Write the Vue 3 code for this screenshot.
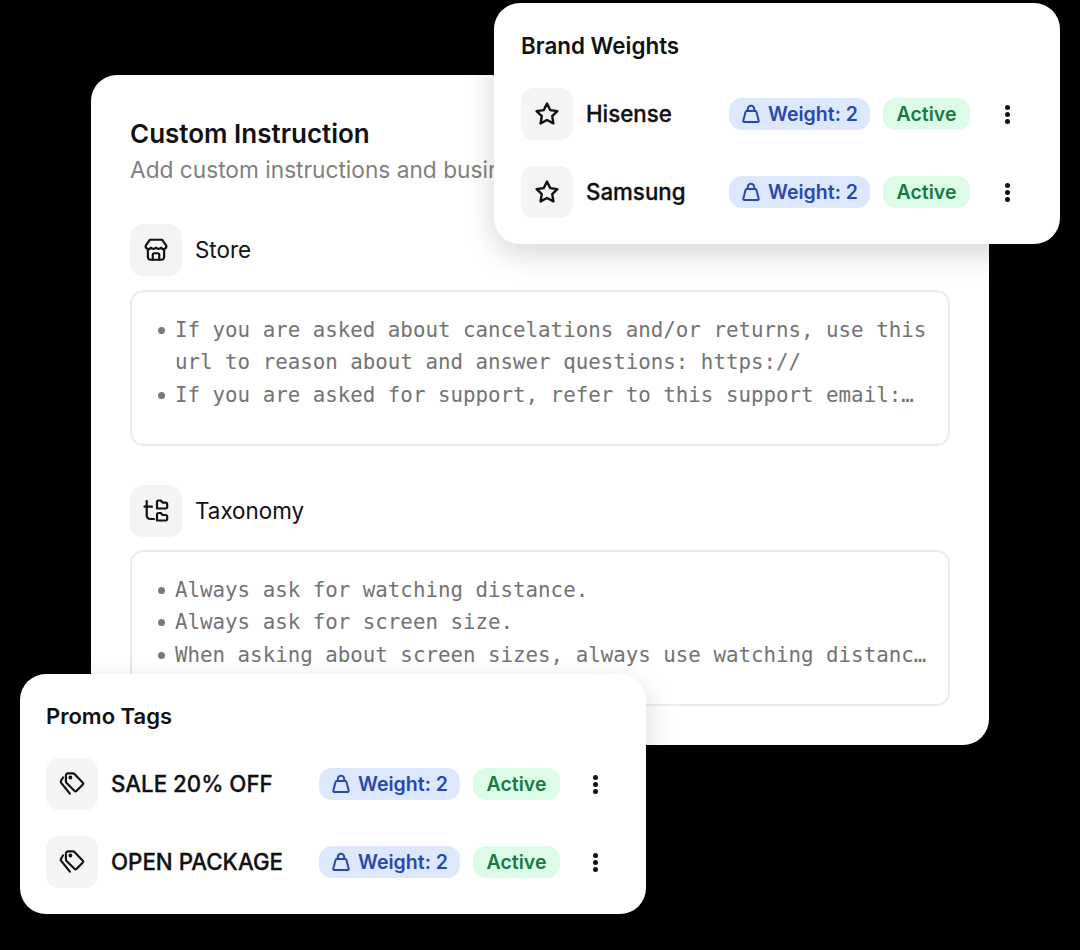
<script setup>
const brands = [{ name: 'Hisense' }, { name: 'Samsung' }]
const promos = [{ name: 'SALE 20% OFF' }, { name: 'OPEN PACKAGE' }]
const storeLines = [
  'If you are asked about cancelations and/or returns, use this url to reason about and answer questions: https://',
  'If you are asked for support, refer to this support email:…',
]
const taxonomyLines = [
  'Always ask for watching distance.',
  'Always ask for screen size.',
  'When asking about screen sizes, always use watching distanc…',
]
</script>

<template>
  <div class="stage">
    <section class="main-card">
      <h1 class="main-title">Custom Instruction</h1>
      <p class="main-sub">Add custom instructions and business</p>

      <div class="field-head store-head">
        <span class="icon-box">
          <svg class="icon" viewBox="0 0 24 24" fill="none" stroke="#111" stroke-width="2" stroke-linejoin="round" stroke-linecap="round">
            <path d="M6.500 2.500h11L21.500 8a2.600 2.600 0 0 1-4.800 1.800 3 3 0 0 1-4.700 0 3 3 0 0 1-4.700 0A2.600 2.600 0 0 1 2.500 8z" />
            <path d="M4.500 11.500v7A2.500 2.500 0 0 0 7 21h10a2.500 2.500 0 0 0 2.500-2.500v-7" />
            <path d="M9 21v-4.500a1.500 1.500 0 0 1 1.500-1.500h3a1.500 1.500 0 0 1 1.500 1.500V21" />
          </svg>
        </span>
        <span class="field-label">Store</span>
      </div>
      <ul class="text-box">
        <li v-for="line in storeLines" :key="line">{{ line }}</li>
      </ul>

      <div class="field-head taxonomy-head">
        <span class="icon-box">
          <svg class="icon" viewBox="0 0 26 26" fill="none" stroke="#111" stroke-width="2.200" stroke-linejoin="round" stroke-linecap="round">
            <path d="M3.700 3v14.500A3.500 3.500 0 0 0 7.200 21H11" />
            <path d="M1.500 8.700H9" />
            <path d="M14 10.500V4A1.500 1.500 0 0 1 15.500 2.500h2.300l1.700 2.200h3.200a1.500 1.500 0 0 1 1.500 1.500v2.800a1.500 1.500 0 0 1-1.500 1.500z" />
            <path d="M14 22.500v-6A1.500 1.500 0 0 1 15.500 15h2.300l1.700 2h3.200a1.500 1.500 0 0 1 1.500 1.500V21a1.500 1.500 0 0 1-1.500 1.500z" />
          </svg>
        </span>
        <span class="field-label">Taxonomy</span>
      </div>
      <ul class="text-box second-box">
        <li v-for="line in taxonomyLines" :key="line">{{ line }}</li>
      </ul>
    </section>

    <section class="float-card brand-card">
      <h2 class="float-title">Brand Weights</h2>
      <div v-for="b in brands" :key="b.name" class="row">
        <span class="icon-box">
          <svg class="icon" viewBox="0 0 24 24" fill="none" stroke="#111" stroke-width="2.200" stroke-linejoin="round">
            <path d="M12 2.300l2.950 6.100 6.650.95-4.800 4.650 1.150 6.700L12 17.550 6.050 20.700l1.150-6.700-4.800-4.650 6.650-.95z" />
          </svg>
        </span>
        <span class="row-name">{{ b.name }}</span>
        <span class="pill pill-weight">
          <svg class="weight-icon" viewBox="0 0 20 20" fill="none" stroke="#2a47ae" stroke-width="2" stroke-linejoin="round">
            <path d="M6.800 7V5a3.200 3.200 0 0 1 6.400 0V7" />
            <path d="M5.600 7h8.800a1 1 0 0 1 1 .8l2.300 9a1 1 0 0 1-1 1.200H3.300a1 1 0 0 1-1-1.200l2.300-9a1 1 0 0 1 1-.8z" />
          </svg>
          Weight: 2
        </span>
        <span class="pill pill-active">Active</span>
        <span class="dots"><i></i><i></i><i></i></span>
      </div>
    </section>

    <section class="float-card promo-card">
      <h2 class="float-title">Promo Tags</h2>
      <div v-for="p in promos" :key="p.name" class="row">
        <span class="icon-box">
          <svg class="icon" viewBox="0 0 24 24" fill="none" stroke="#111" stroke-width="2" stroke-linejoin="round" stroke-linecap="round">
            <path d="M8.300 2.200h4.500a2 2 0 0 1 1.500.6l7.500 7.800a1.500 1.500 0 0 1 0 2.100l-5.500 5.600a1.500 1.500 0 0 1-2.100 0L7 11a2 2 0 0 1-.6-1.400V4.100a1.900 1.900 0 0 1 1.900-1.900z" />
            <path d="M3.700 6 2 8.800a2 2 0 0 0 .2 2.400l7.800 9.700" />
            <circle cx="10.500" cy="6" r="0.800" />
          </svg>
        </span>
        <span class="row-name">{{ p.name }}</span>
        <span class="pill pill-weight">
          <svg class="weight-icon" viewBox="0 0 20 20" fill="none" stroke="#2a47ae" stroke-width="2" stroke-linejoin="round">
            <path d="M6.800 7V5a3.200 3.200 0 0 1 6.400 0V7" />
            <path d="M5.600 7h8.800a1 1 0 0 1 1 .8l2.300 9a1 1 0 0 1-1 1.200H3.300a1 1 0 0 1-1-1.200l2.300-9a1 1 0 0 1 1-.8z" />
          </svg>
          Weight: 2
        </span>
        <span class="pill pill-active">Active</span>
        <span class="dots"><i></i><i></i><i></i></span>
      </div>
    </section>
  </div>
</template>

<style>
html, body {
  background: #000;
}
</style>

<style scoped>
.stage {
  position: relative;
  height: 950px;
  padding: 75px 0 0 91px;
  box-sizing: border-box;
  overflow: hidden;
  font-family: Inter, "Liberation Sans", sans-serif;
  color: #111;
}
.main-card {
  width: 898px;
  height: 670px;
  box-sizing: border-box;
  padding: 44px 39px 0;
  background: #fff;
  border-radius: 26px;
}
.main-title {
  margin: 0;
  font-size: 26px;
  line-height: 30px;
  font-weight: 600;
}
.main-sub {
  margin: 6px 0 0;
  font-size: 22.700px;
  line-height: 30px;
  font-weight: 400;
  color: #7f7f7f;
  white-space: nowrap;
}
.field-head {
  display: flex;
  align-items: center;
  gap: 13px;
}
.store-head {
  margin-top: 39px;
}
.taxonomy-head {
  margin-top: 39px;
}
.field-label {
  font-size: 22.400px;
  line-height: 30px;
  font-weight: 400;
}
.icon-box {
  flex: none;
  width: 52px;
  height: 52px;
  border-radius: 13px;
  background: #f4f4f4;
  display: flex;
  align-items: center;
  justify-content: center;
}
.icon {
  width: 26px;
  height: 26px;
}
.text-box {
  list-style: none;
  margin: 14px 0 0;
  padding: 21.500px 18px 0 26px;
  height: 156px;
  box-sizing: border-box;
  border: 2px solid #ececec;
  border-radius: 14px;
  font-family: "DejaVu Sans Mono", "Liberation Mono", monospace;
  font-size: 20.800px;
  line-height: 32.800px;
  color: #737373;
}
.second-box {
  margin-top: 13px;
}
.text-box li {
  display: flex;
  gap: 10px;
}
.text-box li::before {
  content: "";
  flex: none;
  width: 7px;
  height: 7px;
  margin-top: 13px;
  border-radius: 50%;
  background: #7a7a7a;
}
.float-card {
  position: absolute;
  box-sizing: border-box;
  background: #fff;
  border-radius: 26px;
  box-shadow: 0 10px 30px rgba(0, 0, 0, 0.16);
}
.brand-card {
  left: 494px;
  top: 3px;
  width: 566px;
  height: 241px;
  padding: 27px 27px 0;
}
.promo-card {
  left: 20px;
  top: 674px;
  width: 626px;
  height: 240px;
  padding: 26px 25px 0 26px;
}
.float-title {
  margin: 0 0 26px;
  font-size: 22.400px;
  line-height: 32px;
  font-weight: 600;
}
.promo-card .float-title {
  font-size: 22px;
}
.row {
  display: flex;
  align-items: center;
  height: 52px;
  margin-bottom: 26px;
}
.row-name {
  margin: -1px 0 0 13px;
  flex: 1;
  font-size: 22.300px;
  font-weight: 500;
  -webkit-text-stroke: 0.3px #111;
  white-space: nowrap;
}
.pill {
  display: flex;
  align-items: center;
  justify-content: center;
  height: 32px;
  box-sizing: border-box;
  border-radius: 13px;
  font-size: 19.500px;
  font-weight: 600;
  white-space: nowrap;
}
.pill-weight {
  width: 141px;
  gap: 7px;
  background: #dbe8fe;
  color: #2a47ae;
}
.pill-active {
  width: 87px;
  margin-left: 13px;
  background: #dcfce7;
  color: #177a43;
}
.weight-icon {
  width: 20px;
  height: 20px;
}
.dots {
  flex: none;
  width: 5px;
  margin: 0 23px 0 35px;
  display: flex;
  flex-direction: column;
  gap: 2px;
}
.promo-card .dots {
  margin-left: 33px;
}
.dots i {
  display: block;
  width: 5px;
  height: 5px;
  border-radius: 50%;
  background: #111;
}
</style>
